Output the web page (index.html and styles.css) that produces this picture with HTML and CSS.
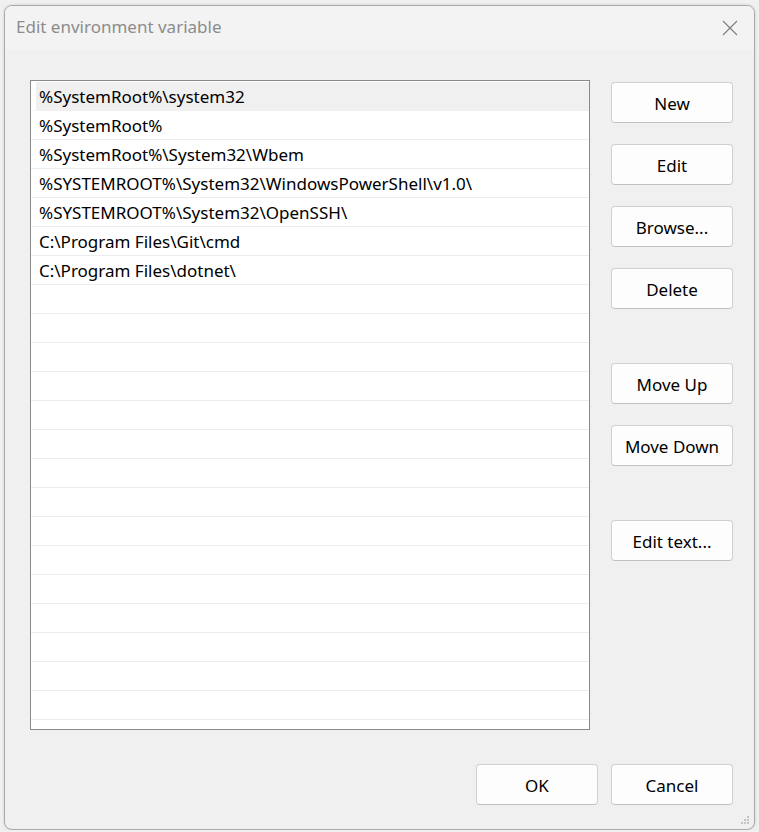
FILE: index.html
```html
<!DOCTYPE html>
<html lang="en">
<head>
    <meta charset="UTF-8">
    <meta name="viewport" content="width=device-width, initial-scale=1.0">
    <title>Edit environment variable</title>
    <link rel="stylesheet" href="styles.css">
</head>
<body>
    <div class="dialog">
        <div class="titlebar">
            <span class="title">Edit environment variable</span>
            <svg class="close" width="16" height="16" viewBox="0 0 16 16">
                <path d="M1 1 L15 15 M15 1 L1 15" stroke="#7f7f7f" stroke-width="1.2" fill="none"/>
            </svg>
        </div>

        <div class="content">
            <div class="list">
                <div class="row selected">%SystemRoot%\system32</div>
                <div class="row">%SystemRoot%</div>
                <div class="row">%SystemRoot%\System32\Wbem</div>
                <div class="row">%SYSTEMROOT%\System32\WindowsPowerShell\v1.0\</div>
                <div class="row">%SYSTEMROOT%\System32\OpenSSH\</div>
                <div class="row">C:\Program Files\Git\cmd</div>
                <div class="row">C:\Program Files\dotnet\</div>
                <div class="row"></div>
                <div class="row"></div>
                <div class="row"></div>
                <div class="row"></div>
                <div class="row"></div>
                <div class="row"></div>
                <div class="row"></div>
                <div class="row"></div>
                <div class="row"></div>
                <div class="row"></div>
                <div class="row"></div>
                <div class="row"></div>
                <div class="row"></div>
                <div class="row"></div>
                <div class="row"></div>
                <div class="row"></div>
            </div>

            <div class="side">
                <div class="group">
                    <button>New</button>
                    <button>Edit</button>
                    <button>Browse...</button>
                    <button>Delete</button>
                </div>
                <div class="group">
                    <button>Move Up</button>
                    <button>Move Down</button>
                </div>
                <div class="group">
                    <button>Edit text...</button>
                </div>
            </div>
        </div>

        <div class="footer">
            <button>OK</button>
            <button>Cancel</button>
        </div>

        <svg class="grip" width="12" height="12" viewBox="0 0 12 12">
            <rect x="8" y="0" width="2" height="2" fill="#c4c4c4"/>
            <rect x="5" y="3" width="2" height="2" fill="#c4c4c4"/>
            <rect x="8" y="3" width="2" height="2" fill="#c4c4c4"/>
            <rect x="2" y="6" width="2" height="2" fill="#c4c4c4"/>
            <rect x="5" y="6" width="2" height="2" fill="#c4c4c4"/>
            <rect x="8" y="6" width="2" height="2" fill="#c4c4c4"/>
        </svg>
    </div>
</body>
</html>
```

FILE: styles.css
```css
body {
    margin: 0;
    background-color: #f0f0f0;
    font-family: 'Noto Sans', 'Open Sans', sans-serif;
    font-size: 17px;
    color: #000;
}
.dialog {
    position: relative;
    box-sizing: border-box;
    width: 751px;
    height: 825px;
    margin: 5px 0 0 4px;
    display: flex;
    flex-direction: column;
    background-color: #f0f0f0;
    border: 1px solid #a9a9a9;
    border-radius: 8px;
    overflow: hidden;
    box-shadow: 0 0 3px rgba(0, 0, 0, 0.15);
}
.titlebar {
    box-sizing: border-box;
    height: 44px;
    flex: none;
    display: flex;
    align-items: center;
    justify-content: space-between;
    padding: 0 16px 3px 11px;
    background-color: #f3f3f3;
}
.title {
    color: #8c8c8c;
}
.close {
    display: block;
    margin-top: 2px;
}
.content {
    flex: 1;
    display: flex;
    gap: 21px;
    padding: 30px 0 0 25px;
}
.list {
    box-sizing: border-box;
    width: 560px;
    height: 650px;
    padding-top: 1px;
    background: #fff;
    border: 1px solid #8a8a8a;
    overflow: hidden;
}
.row {
    box-sizing: border-box;
    height: 29px;
    line-height: 30px;
    padding-left: 8px;
    border-bottom: 1px solid #ededed;
    white-space: nowrap;
    overflow: hidden;
}
.row.selected {
    border-left: 5px solid #fff;
    padding-left: 3px;
    background-color: #f0f0f0;
    border-bottom-color: #f0f0f0;
}
.side {
    display: flex;
    flex-direction: column;
    gap: 54px;
    padding-top: 2px;
}
.group {
    display: flex;
    flex-direction: column;
    gap: 21px;
}
button {
    box-sizing: border-box;
    width: 122px;
    height: 41px;
    padding: 1px 0 0;
    font-family: inherit;
    font-size: 17px;
    color: #000;
    background-color: #fdfdfd;
    border: 1px solid #d0d0d0;
    border-bottom-color: #c2c2c2;
    border-radius: 4px;
}
.footer {
    flex: none;
    display: flex;
    justify-content: flex-end;
    gap: 13px;
    padding: 0 21px 24px 0;
}
.grip {
    position: absolute;
    right: 3px;
    bottom: 1px;
}
```
